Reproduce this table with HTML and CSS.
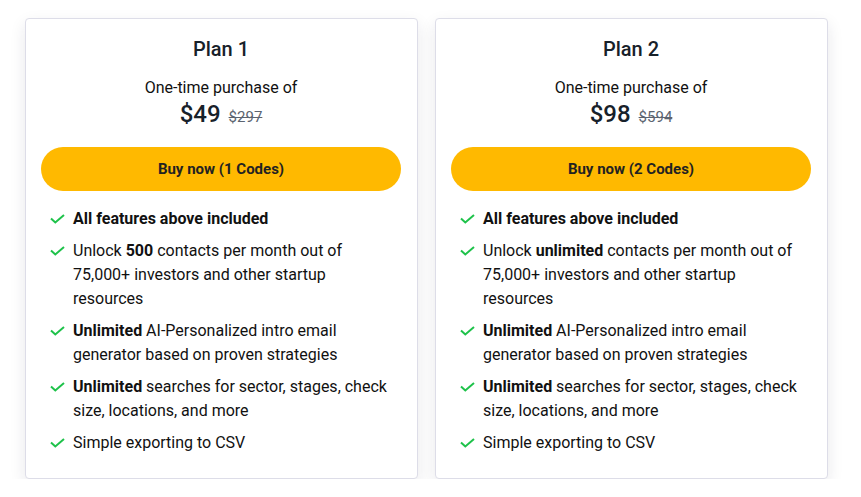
FILE: index.html
```html
<!DOCTYPE html>
<html>
<head>
<meta charset="utf-8">
<link rel="stylesheet" href="styles.css">
</head>
<body>
<div class="plans">
  <div class="card">
    <h2 class="title">Plan 1</h2>
    <p class="sub">One-time purchase of</p>
    <div class="price"><span class="now">$49</span><span class="old">$297</span></div>
    <button class="buy">Buy now (1 Codes)</button>
    <ul class="features">
      <li><svg class="check" viewBox="0 0 15 10"><path d="M1 4.5l4.3 4 8.7-7.5"/></svg><span><b>All features above included</b></span></li>
      <li><svg class="check" viewBox="0 0 15 10"><path d="M1 4.5l4.3 4 8.7-7.5"/></svg><span>Unlock <b>500</b> contacts per month out of 75,000+ investors and other startup resources</span></li>
      <li><svg class="check" viewBox="0 0 15 10"><path d="M1 4.5l4.3 4 8.7-7.5"/></svg><span><b>Unlimited</b> AI-Personalized intro email generator based on proven strategies</span></li>
      <li><svg class="check" viewBox="0 0 15 10"><path d="M1 4.5l4.3 4 8.7-7.5"/></svg><span><b>Unlimited</b> searches for sector, stages, check size, locations, and more</span></li>
      <li><svg class="check" viewBox="0 0 15 10"><path d="M1 4.5l4.3 4 8.7-7.5"/></svg><span>Simple exporting to CSV</span></li>
    </ul>
  </div>
  <div class="card">
    <h2 class="title">Plan 2</h2>
    <p class="sub">One-time purchase of</p>
    <div class="price"><span class="now">$98</span><span class="old">$594</span></div>
    <button class="buy">Buy now (2 Codes)</button>
    <ul class="features">
      <li><svg class="check" viewBox="0 0 15 10"><path d="M1 4.5l4.3 4 8.7-7.5"/></svg><span><b>All features above included</b></span></li>
      <li><svg class="check" viewBox="0 0 15 10"><path d="M1 4.5l4.3 4 8.7-7.5"/></svg><span>Unlock <b>unlimited</b> contacts per month out of 75,000+ investors and other startup resources</span></li>
      <li><svg class="check" viewBox="0 0 15 10"><path d="M1 4.5l4.3 4 8.7-7.5"/></svg><span><b>Unlimited</b> AI-Personalized intro email generator based on proven strategies</span></li>
      <li><svg class="check" viewBox="0 0 15 10"><path d="M1 4.5l4.3 4 8.7-7.5"/></svg><span><b>Unlimited</b> searches for sector, stages, check size, locations, and more</span></li>
      <li><svg class="check" viewBox="0 0 15 10"><path d="M1 4.5l4.3 4 8.7-7.5"/></svg><span>Simple exporting to CSV</span></li>
    </ul>
  </div>
</div>
</body>
</html>
```

FILE: styles.css
```css
html, body {
  margin: 0;
  padding: 0;
  background: #ffffff;
}
body {
  font-family: Roboto, "Liberation Sans", sans-serif;
  color: #111;
}
.plans {
  display: flex;
  gap: 17px;
  padding: 18px 0 0 25px;
}
.card {
  width: 393px;
  box-sizing: border-box;
  height: 461px;
  background: #fff;
  border: 1px solid #dddde8;
  border-radius: 4px;
  box-shadow: 0 6px 16px rgba(30, 30, 60, 0.10);
  padding: 16px 16px 0 15px;
  display: flex;
  flex-direction: column;
}
.title {
  margin: 0;
  font-size: 20px;
  font-weight: 500;
  text-align: center;
  color: #17212a;
  line-height: 28px;
}
.sub {
  margin: 13px 0 0;
  text-align: center;
  font-size: 16px;
  line-height: 24px;
  color: #111;
}
.price {
  display: flex;
  justify-content: center;
  align-items: baseline;
  gap: 8px;
  line-height: 30px;
  margin-top: -1px;
}
.now {
  font-size: 24px;
  font-weight: 500;
  color: #17212a;
}
.old {
  font-size: 15px;
  color: #5c6470;
  text-decoration: line-through;
}
.buy {
  margin-top: 15px;
  height: 44px;
  border: none;
  border-radius: 22px;
  background: #ffb900;
  font-family: Roboto, "Liberation Sans", sans-serif;
  font-size: 15px;
  font-weight: 700;
  color: #222;
  width: 100%;
}
.features {
  list-style: none;
  margin: 16px 0 0;
  padding: 0 14px 0 9px;
  display: flex;
  flex-direction: column;
  gap: 8px;
}
.features li {
  display: flex;
  gap: 8px;
  font-size: 16px;
  line-height: 24px;
  color: #111;
}
.features b {
  font-weight: 700;
}
.check {
  flex: 0 0 15px;
  width: 15px;
  height: 10px;
  margin-top: 7px;
  fill: none;
  stroke: #1ec24a;
  stroke-width: 2;
}
```
